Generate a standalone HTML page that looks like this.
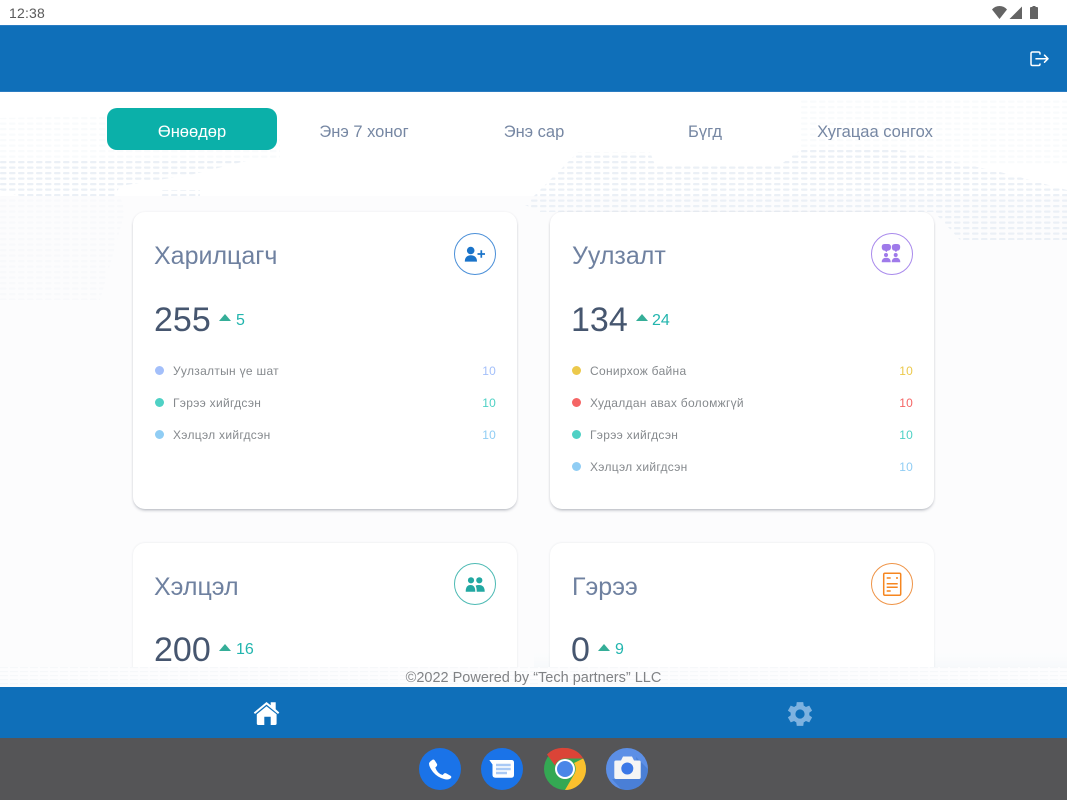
<!DOCTYPE html>
<html><head><meta charset="utf-8">
<style>
html,body{margin:0;padding:0;width:1067px;height:800px;overflow:hidden;background:#fff;font-family:"Liberation Sans",sans-serif}
.a{position:absolute;white-space:nowrap}
#root{position:relative;width:1067px;height:800px;overflow:hidden}
.card{position:absolute;width:384px;background:#fff;border-radius:12px;box-shadow:0 2px 3px -1px rgba(50,60,80,.38),0 0 2px rgba(60,70,90,.08)}
.card.low{box-shadow:0 0 2px rgba(60,70,90,.12);height:170px}
.tab{position:absolute;top:108px;height:31.5px;overflow:hidden;line-height:48px;text-align:center;font-size:16.5px;color:#7687a3}
.title{font-size:25px;color:#6f81a0}
.num{font-size:34px;color:#46566f}
.delta{font-size:16px;color:#22b5ae}
.tri{position:absolute;width:0;height:0;border-left:6px solid transparent;border-right:6px solid transparent;border-bottom:7px solid #35ae98}
.dot{position:absolute;width:9px;height:9px;border-radius:50%}
.lbl{font-size:12px;color:#85898d;letter-spacing:.3px}
.val{font-size:12px;letter-spacing:.2px;text-align:right;width:30px}
.ring{position:absolute;width:40px;height:40px;border-radius:50%;border:1px solid;background:#fff}
</style></head><body><div id="root">

<svg class="a" style="left:0;top:92px" width="1067" height="595" viewBox="0 92 1067 595">
<defs>
<pattern id="d" width="9" height="5.5" patternUnits="userSpaceOnUse"><rect x="0" y="1.5" width="6.5" height="2.2" rx="1" fill="#ebf0f6"/></pattern>
<linearGradient id="fx" x1="0" y1="0" x2="0" y2="1"><stop offset="0" stop-color="#fff" stop-opacity="0"/><stop offset="1" stop-color="#f7f9fb"/></linearGradient>
</defs>
<rect x="0" y="92" width="1067" height="595" fill="#fff"/>
<rect x="0" y="196" width="1067" height="491" fill="#fcfcfd"/>
<path fill="url(#d)" opacity=".3" d="M0 118 L100 116 L280 135 L280 160 L0 160Z"/>
<path fill="url(#d)" d="M0 160 L250 160 L190 175 L120 186 L115 196 L20 196 L0 190Z M160 190 L200 190 L200 196 L160 196Z"/>
<path fill="url(#d)" opacity=".3" d="M800 100 L1067 100 L1067 165 L940 165 L800 150Z"/>
<path fill="url(#d)" d="M578 152 L650 152 L655 165 L780 165 L800 150 L900 150 L1000 172 L1067 190 L1067 240 L960 240 L934 212 L540 212 L525 205 L560 170Z"/>
<path fill="url(#d)" opacity=".25" d="M0 196 L120 196 L125 212 L100 300 L0 300Z"/>
<rect x="534" y="640" width="533" height="27" fill="url(#fx)"/>
</svg>

<!-- status bar -->
<div class="a" style="left:0;top:0;width:1067px;height:25px;background:#fff"></div>
<div class="a" style="left:9px;top:5px;font-size:14px;color:#5a5a5a;letter-spacing:.2px">12:38</div>
<svg class="a" style="left:985px;top:0" width="82" height="25" viewBox="985 0 82 25" fill="#646464">
<path d="M992 9.5 Q995 6 999.5 6 Q1004 6 1007 9.5 L999.5 19Z"/>
<path d="M1022 6.5 V19 H1009.5Z"/>
<path d="M1030 8 Q1030 7 1031 7 H1032.5 V6 H1035.5 V7 H1037 Q1038 7 1038 8 V19 H1030Z"/>
</svg>

<!-- header -->
<div class="a" style="left:0;top:25px;width:1067px;height:67px;background:#0f6fb9;border-top:1px solid #2a7cc2;border-bottom:1px solid #2a7cc2;box-sizing:border-box"></div>
<svg class="a" style="left:1025px;top:45px" width="30" height="27" viewBox="1025 45 30 27" fill="none" stroke="#fff" stroke-width="1.5" stroke-linecap="round" stroke-linejoin="round">
<path d="M1040 54 V53.5 Q1040 52 1038.5 52 H1032.5 Q1031 52 1031 53.5 V64 Q1031 65.5 1032.5 65.5 H1038.5 Q1040 65.5 1040 64"/>
<path d="M1036 58.7 H1048 M1044.5 55.2 L1048 58.7 L1044.5 62.2"/>
</svg>

<!-- tabs -->
<div class="a" style="left:107px;top:108px;width:170px;height:42px;background:#0bb0a9;border-radius:10px"></div>
<div class="tab" style="left:107px;width:170px;color:#fff">Өнөөдөр</div>
<div class="tab" style="left:279px;width:170px">Энэ 7 хоног</div>
<div class="tab" style="left:449px;width:170px">Энэ сар</div>
<div class="tab" style="left:620px;width:170px">Бүгд</div>
<div class="tab" style="left:790px;width:170px">Хугацаа сонгох</div>

<!-- cards -->
<div class="card" style="left:133px;top:212px;height:297px"></div>
<div class="card" style="left:550px;top:212px;height:297px"></div>
<div class="card low" style="left:133px;top:543px"></div>
<div class="card low" style="left:550px;top:543px"></div>

<!-- Card 1 -->
<div class="a title" style="left:154px;top:242px">Харилцагч</div>
<div class="ring" style="left:454px;top:233px;border-color:#4a8fd8"></div>
<svg class="a" style="left:454px;top:233px" width="42" height="42" viewBox="454 233 42 42" fill="#1a73c9">
<circle cx="470.7" cy="250.5" r="3.8"/>
<path d="M464.8 261.6 Q464.8 255.4 470.8 255.2 Q477 255.4 477 261.6Z"/>
<path d="M477.5 254 H485 M481.3 250.2 V257.8" stroke="#1a73c9" stroke-width="1.7" fill="none"/>
</svg>
<div class="a num" style="left:154px;top:301px">255</div>
<div class="tri" style="left:219px;top:314px"></div>
<div class="a delta" style="left:236px;top:312px">5</div>
<div class="dot" style="left:155px;top:366px;background:#a3bffa"></div>
<div class="a lbl" style="left:173px;top:364px">Уулзалтын үе шат</div>
<div class="a val" style="left:466px;top:364px;color:#a3bffa">10</div>
<div class="dot" style="left:155px;top:398px;background:#4fd1c5"></div>
<div class="a lbl" style="left:173px;top:396px">Гэрээ хийгдсэн</div>
<div class="a val" style="left:466px;top:396px;color:#4fd1c5">10</div>
<div class="dot" style="left:155px;top:430px;background:#90cdf4"></div>
<div class="a lbl" style="left:173px;top:428px">Хэлцэл хийгдсэн</div>
<div class="a val" style="left:466px;top:428px;color:#90cdf4">10</div>

<!-- Card 2 -->
<div class="a title" style="left:572px;top:242px">Уулзалт</div>
<div class="ring" style="left:871px;top:233px;border-color:#a98aec"></div>
<svg class="a" style="left:871px;top:233px" width="42" height="42" viewBox="871 233 42 42" fill="#9f7aea">
<path d="M884.5 244 H888 Q891 244 891 247 Q891 250.7 887.5 250.7 L886.3 252.3 L885.1 250.7 Q881.7 250.7 881.7 247 Q881.7 244 884.5 244Z"/>
<path d="M895 244 H897.3 Q900.2 244 900.2 247 Q900.2 250.7 897 250.7 L895.9 252.3 L894.8 250.7 Q891.8 250.7 891.8 247 Q891.8 244 895 244Z"/>
<circle cx="886" cy="255" r="2"/><circle cx="895.7" cy="255" r="2"/>
<path d="M881.7 262.3 Q881.7 257.7 886.2 257.7 Q890.7 257.7 890.7 262.3Z"/>
<path d="M891.7 262.3 Q891.7 257.7 896 257.7 Q900.3 257.7 900.3 262.3Z"/>
</svg>
<div class="a num" style="left:571px;top:301px">134</div>
<div class="tri" style="left:636px;top:314px"></div>
<div class="a delta" style="left:652px;top:312px">24</div>
<div class="dot" style="left:572px;top:366px;background:#ecc94b"></div>
<div class="a lbl" style="left:590px;top:364px">Сонирхож байна</div>
<div class="a val" style="left:883px;top:364px;color:#ecc94b">10</div>
<div class="dot" style="left:572px;top:398px;background:#f56565"></div>
<div class="a lbl" style="left:590px;top:396px">Худалдан авах боломжгүй</div>
<div class="a val" style="left:883px;top:396px;color:#f56565">10</div>
<div class="dot" style="left:572px;top:430px;background:#4fd1c5"></div>
<div class="a lbl" style="left:590px;top:428px">Гэрээ хийгдсэн</div>
<div class="a val" style="left:883px;top:428px;color:#4fd1c5">10</div>
<div class="dot" style="left:572px;top:462px;background:#90cdf4"></div>
<div class="a lbl" style="left:590px;top:460px">Хэлцэл хийгдсэн</div>
<div class="a val" style="left:883px;top:460px;color:#90cdf4">10</div>

<!-- Card 3 -->
<div class="a title" style="left:154px;top:573px">Хэлцэл</div>
<div class="ring" style="left:454px;top:563px;border-color:#4dbab4"></div>
<svg class="a" style="left:454px;top:563px" width="42" height="42" viewBox="454 563 42 42" fill="#22a8a2">
<circle cx="471" cy="580.3" r="3.1"/><circle cx="479.3" cy="580.3" r="3.1"/>
<path d="M465.7 591.7 Q465.7 585 470.5 585 Q475.3 585 475.3 591.7Z"/>
<path d="M476.7 591.7 Q476.7 587.5 475.6 585.6 Q477 585 479 585 Q484.7 585 484.7 591.7Z"/>
</svg>
<div class="a num" style="left:154px;top:631px">200</div>
<div class="tri" style="left:219px;top:644px"></div>
<div class="a delta" style="left:236px;top:641px">16</div>

<!-- Card 4 -->
<div class="a title" style="left:572px;top:573px">Гэрээ</div>
<div class="ring" style="left:871px;top:563px;border-color:#ef9447"></div>
<svg class="a" style="left:871px;top:563px" width="42" height="42" viewBox="871 563 42 42" fill="none" stroke="#f6861f" stroke-width="1.5">
<rect x="883.7" y="573.2" width="17" height="22" rx="1.2"/>
<path d="M886.7 578 H890.7 M896 578 H898 M886.7 583.7 H897.7 M886.7 587.3 H897.7 M886.7 591 H890.7"/>
</svg>
<div class="a num" style="left:571px;top:631px">0</div>
<div class="tri" style="left:598px;top:644px"></div>
<div class="a delta" style="left:615px;top:641px">9</div>

<!-- footer fade -->
<svg class="a" style="left:0;top:667px" width="1067" height="20" viewBox="0 0 1067 20">
<defs><pattern id="f2" width="10" height="4" patternUnits="userSpaceOnUse"><rect width="8" height="1.2" fill="#f6f8fa"/></pattern></defs>
<rect width="1067" height="20" fill="#fdfdfe"/>
<rect width="1067" height="20" fill="url(#f2)"/>
</svg>
<div class="a" style="left:0;top:670px;width:1067px;text-align:center;font-size:14.5px;color:#808285;line-height:16px">©2022 Powered by “Tech partners” LLC</div>

<!-- bottom nav -->
<div class="a" style="left:0;top:687px;width:1067px;height:51px;background:#0f6fb9"></div>
<svg class="a" style="left:250px;top:698px" width="34" height="30" viewBox="250 698 34 30" fill="#fff">
<path d="M266.5 702 L270.7 705.3 V702.3 H275.7 V709.3 L279.3 712.5 L278 714 L266.5 704.6 L255 714 L253.8 712.5Z"/>
<path d="M256.8 714.3 L266.5 706.3 L276.6 714.3 V723.5 Q276.6 725 275 725 H270.7 V716.8 H264.3 V725 H258.3 Q256.8 725 256.8 723.5Z"/>
</svg>
<svg class="a" style="left:785px;top:698.5px" width="30" height="30" viewBox="0 0 24 24">
<path fill="#7db2e0" fill-rule="evenodd" d="M19.4 13a7.6 7.6 0 0 0 0-2l2.3-1.7-2.3-4-2.7 1.1a7.6 7.6 0 0 0-1.7-1L14.6 2.5H9.4L9 5.4a7.6 7.6 0 0 0-1.7 1L4.6 5.3l-2.3 4L4.6 11a7.6 7.6 0 0 0 0 2l-2.3 1.7 2.3 4 2.7-1.1a7.6 7.6 0 0 0 1.7 1l.4 2.9h5.2l.4-2.9a7.6 7.6 0 0 0 1.7-1l2.7 1.1 2.3-4ZM12 15.7a3.7 3.7 0 1 1 0-7.4 3.7 3.7 0 0 1 0 7.4Z"/>
</svg>

<!-- system dock -->
<div class="a" style="left:0;top:738px;width:1067px;height:62px;background:#555557"></div>
<svg class="a" style="left:410px;top:740px" width="250" height="60" viewBox="410 740 250 60">
<defs><clipPath id="cam"><circle cx="627" cy="769" r="21"/></clipPath></defs>
<circle cx="440" cy="769" r="21" fill="#1a73e8"/>
<path d="M431.5 760.5 Q433.5 758.5 434.8 760.5 L437 764 Q437.6 765.5 436.3 766.6 L435.3 767.5 Q436 770 438 772.2 Q440 774.3 442.6 775 L443.8 773.7 Q445 772.7 446.5 773.5 L450.5 775.7 Q452.3 777 450.3 778.6 Q447.8 780.2 444 779 Q437.5 777.3 433 772 Q429 766.8 429 763.5 Q429.3 761.8 431.5 760.5Z" fill="#fff"/>

<circle cx="502" cy="769" r="21" fill="#1a73e8"/>
<path d="M489.3 760 H511.5 Q514 760 514 762.5 V775 Q514 777.7 511.5 777.7 H495.5 Q492.5 777.7 492.5 775 V764.5Z" fill="#fff"/>
<path d="M496 765 H510.7 M496 769 H510.7 M496 773 H507" stroke="#a9c9f5" stroke-width="2.4"/>

<circle cx="565" cy="769" r="21" fill="#34a853"/>
<path d="M565 748 A21 21 0 0 1 583.2 758.5 H565 A10.5 10.5 0 0 0 555 765.5 L547 754.5 A21 21 0 0 1 565 748Z" fill="#db4437"/>
<path d="M583.2 758.5 A21 21 0 0 1 565 790 L574 774.5 A10.5 10.5 0 0 0 574 763 Z" fill="#fbc02d"/>
<circle cx="565" cy="769" r="10" fill="#fff"/><circle cx="565" cy="769" r="8" fill="#4a86e8"/>

<circle cx="627" cy="769" r="21" fill="#5c8fe6"/>
<path clip-path="url(#cam)" d="M636 757 L665 786 L640 810 L612 779 L640 779Z" fill="#4a7fd6"/>
<path d="M616 760.5 H621 L623 756.5 H632 L634 760.5 H639 Q640.7 760.5 640.7 762.2 V777.3 Q640.7 779 639 779 H616 Q614.3 779 614.3 777.3 V762.2 Q614.3 760.5 616 760.5Z" fill="#f5f5f5"/>
<circle cx="627.3" cy="768.5" r="6" fill="#3b78e7"/>
</svg>
</div></body></html>
